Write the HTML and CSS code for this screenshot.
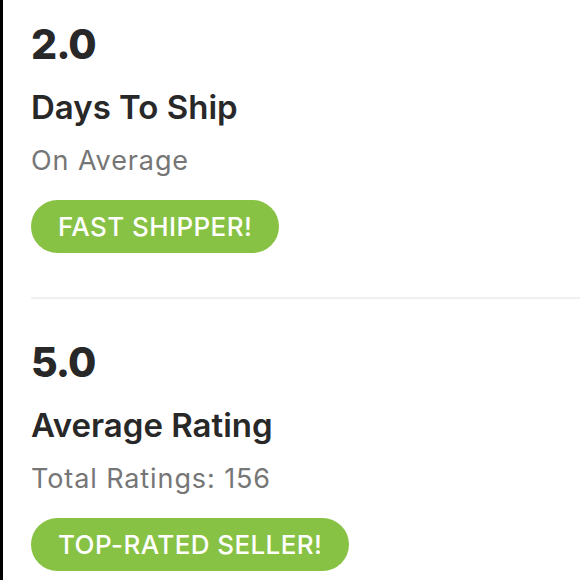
FILE: index.html
```html
<!DOCTYPE html>
<html lang="en">
<head>
<meta charset="utf-8">
<link rel="stylesheet" href="styles.css">
</head>
<body>
<main class="page">
  <section class="stat">
    <div class="value">2.0</div>
    <div class="label">Days To Ship</div>
    <div class="sub">On Average</div>
    <div class="badge">FAST SHIPPER!</div>
  </section>
  <hr class="divider">
  <section class="stat">
    <div class="value">5.0</div>
    <div class="label">Average Rating</div>
    <div class="sub">Total Ratings: 156</div>
    <div class="badge">TOP-RATED SELLER!</div>
  </section>
</main>
</body>
</html>
```
FILE: styles.css
```css
html, body {
  margin: 0;
  padding: 0;
  background: #fff;
}
.page {
  box-sizing: border-box;
  width: 580px;
  height: 580px;
  overflow: hidden;
  border-left: 3px solid #000;
  padding: 19px 0 0 28px;
  font-family: Inter, "Noto Sans", sans-serif;
  color: #282828;
}
.stat {
  display: flex;
  flex-direction: column;
  align-items: flex-start;
}
.value {
  font-size: 41px;
  font-weight: 800;
  line-height: 50px;
  letter-spacing: -1px;
}
.label {
  font-size: 33px;
  font-weight: 600;
  line-height: 40px;
  margin-top: 18px;
}
.sub {
  font-size: 27px;
  font-weight: 400;
  color: #767676;
  line-height: 34px;
  margin-top: 17px;
  letter-spacing: 0.9px;
}
.badge {
  margin-top: 22px;
  height: 53px;
  line-height: 53px;
  padding: 0 27px;
  border-radius: 27px;
  background: #88c244;
  color: #fff;
  font-size: 26px;
  font-weight: 500;
  letter-spacing: 0.4px;
}
.divider {
  border: 0;
  height: 2px;
  background: #f0f0f0;
  margin: 44px 0 38px 0;
}
```
